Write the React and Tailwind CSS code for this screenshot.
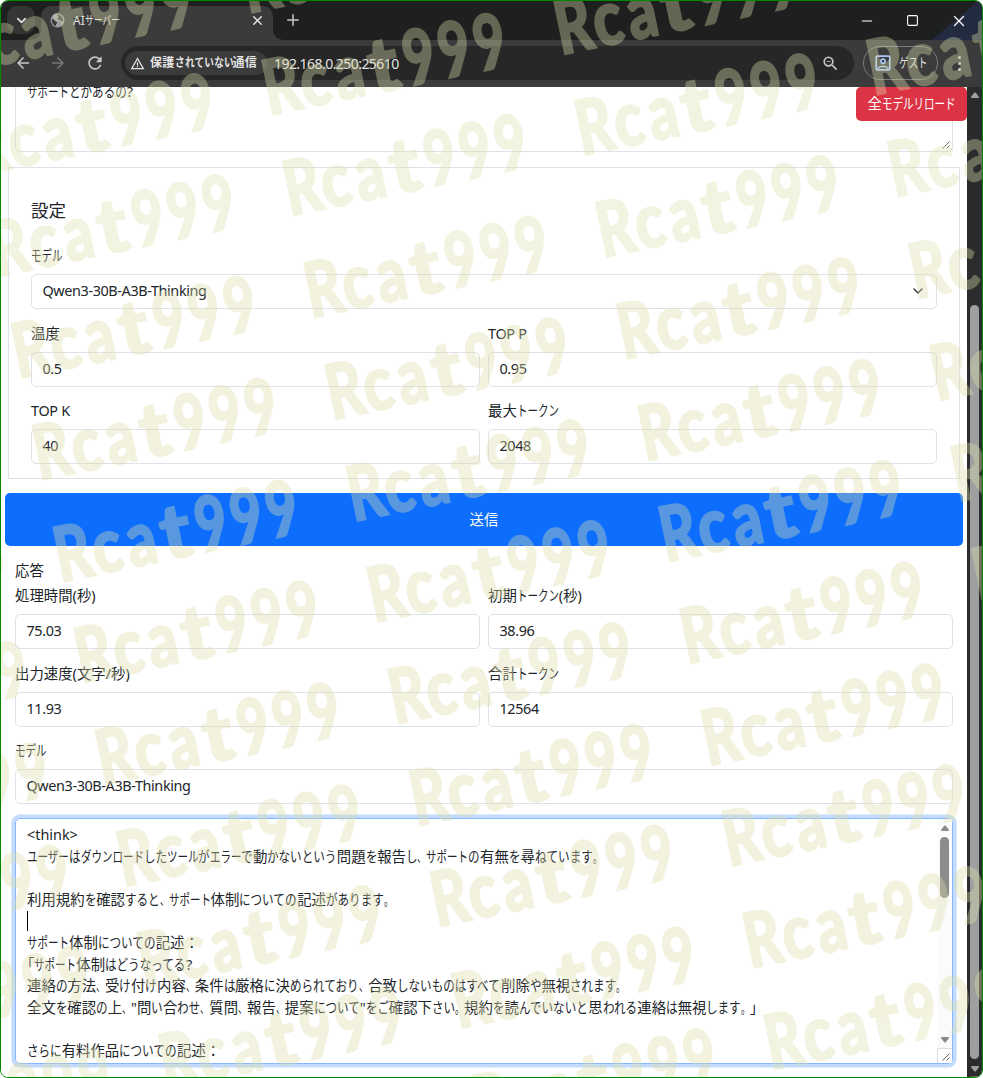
import { ChevronDown, Minus, Plus, Square, X } from 'lucide-react';
import { MdArrowBack, MdArrowForward, MdRefresh, MdWarningAmber, MdZoomOut } from 'react-icons/md';

const WATERMARK = [
  { char: 'R', style: 'scale-x-[0.74]' },
  { char: 'c', style: 'scale-x-[0.8] translate-x-[2px]' },
  { char: 'a', style: 'scale-x-[0.76] translate-x-[1px]' },
  { char: 't', style: 'scale-x-[1.05]' },
  { char: '9', style: 'scale-x-[0.72]' },
  { char: '9', style: 'scale-x-[0.72]' },
  { char: '9', style: 'scale-x-[0.72]' },
];

const RESPONSE_LINES = [
  { text: '<think>' },
  { text: 'ユーザーはダウンロードしたツールがエラーで動かないという問題を報告し、サポートの有無を尋ねています。' },
  { text: '' },
  { text: '利用規約を確認すると、サポート体制についての記述があります。' },
  { text: '', caret: true },
  { text: 'サポート体制についての記述：' },
  { text: '「サポート体制はどうなってる?' },
  { text: '連絡の方法、受け付け内容、条件は厳格に決められており、合致しないものはすべて削除や無視されます。' },
  { text: '全文を確認の上、"問い合わせ、質問、報告、提案について"をご確認下さい。規約を読んでいないと思われる連絡は無視します。」' },
  { text: '' },
  { text: 'さらに有料作品についての記述：' },
];

const CONDENSED = [
  { pattern: /^[\u30a0-\u30ff]/, ratio: 0.73 },
  { pattern: /^[\u3040-\u309f]/, ratio: 0.803 },
  { pattern: /^[、。]/, ratio: 0.62 },
];

/**
 * Japanese UI text: kanji keep their full width, kana and punctuation runs are condensed
 */
const Ja = ({ children }) => {
  const runs = children.match(/[\u30a0-\u30ff]+|[\u3040-\u309f]+|[、。]+|：|[^\u3040-\u30ff、。：]+/g) || [];
  return (
    <span className="inline-block whitespace-nowrap">
      {runs.map((run, i) => {
        const kana = CONDENSED.find((k) => k.pattern.test(run));
        if (!kana) {
          return run === '：' ? <span key={i} className="[font-feature-settings:normal]">{run}</span> : run;
        }
        return (
          <span key={i} className="inline-block [font-feature-settings:normal]" style={{ width: `${run.length * kana.ratio}em` }}>
            <span className="inline-block origin-left" style={{ transform: `scaleX(${kana.ratio})` }}>{run}</span>
          </span>
        );
      })}
    </span>
  );
};

const TabStrip = () => (
  <div className="flex h-[39px] items-start bg-[#1f2120] pl-[6px] text-[#e3e3e3]">
    <button className="mt-[5px] flex h-7 w-7 items-center justify-center rounded-[10px] bg-[#353635]">
      <ChevronDown size={15} strokeWidth={2.6} />
    </button>
    <div className="relative ml-[6px] mt-[5px] flex h-[34px] w-[232px] items-start rounded-t-[10px] bg-[#3c3c3c] pl-[9px] pt-[7px]">
      <svg className="absolute -left-[10px] bottom-0" width="10" height="10" viewBox="0 0 10 10">
        <path d="M10 0v10H0A10 10 0 0 0 10 0Z" fill="#3c3c3c" />
      </svg>
      <svg className="absolute -right-[10px] bottom-0" width="10" height="10" viewBox="0 0 10 10">
        <path d="M0 0v10h10A10 10 0 0 1 0 0Z" fill="#3c3c3c" />
      </svg>
      <svg width="15" height="15" viewBox="0 0 16 16">
        <circle cx="8" cy="8" r="7.4" fill="#9aa0a6" />
        <path d="M2 6.500c2 .2 3 .8 3.600 2 1 .3 2 .6 2 1.800 0 1-1.300 1.100-1.300 2.200v1.500C3.600 13.200 1.500 10.500 2 6.500ZM8.300 1.700c-.8 1-.1 2 1 2.200.1 1.300-1.600 1.100-1.700 2.500.5 1.200 3 .4 3.800 1.900.6.600 1.800.4 2.700.2-.1-3.300-2.300-6.100-5.800-6.800Z" fill="#3c3c3c" />
      </svg>
      <span className="ml-2 text-[12px] leading-[15px]"><Ja>AIサーバー</Ja></span>
      <X className="ml-auto mr-[8px]" size={15} strokeWidth={2.4} />
    </div>
    <Plus className="ml-[11px] mt-[10px] text-[#c7c7c7]" size={18} strokeWidth={2} />
    <div className="ml-auto flex h-[39px] items-center text-white">
      <Minus className="mr-[31px]" size={16} strokeWidth={1.6} />
      <Square size={13} strokeWidth={2} />
      <div className="flex h-full items-center bg-[linear-gradient(140deg,transparent_54%,#232c40_54.5%)] pl-[31px] pr-[14px]">
        <X size={18} strokeWidth={1.6} />
      </div>
    </div>
  </div>
);

const Toolbar = () => (
  <div className="flex h-[47px] items-center bg-[#3c3c3c] pl-[13px] pb-px text-[#c7c7c7]">
    <MdArrowBack size={18} />
    <MdArrowForward className="ml-[17px] text-[#777777]" size={18} />
    <MdRefresh className="ml-[18px]" size={20} />
    <div className="ml-[16px] flex h-[34px] w-[733px] items-center rounded-full bg-[#282828] pl-[4px] pr-[14px]">
      <div className="flex h-6 w-[142px] items-center rounded-full bg-[#3c3c3c] pl-[5px] text-[#e3e3e3]">
        <MdWarningAmber size={15} />
        <span className="ml-[5px] text-[12px] font-bold tracking-[0.3px]"><Ja>保護されていない通信</Ja></span>
      </div>
      <span className="ml-[7px] text-[14px] tracking-[-0.55px] text-[#e3e3e3]">192.168.0.250:25610</span>
      <MdZoomOut className="ml-auto" size={19} />
    </div>
    <div className="ml-[9px] flex h-[34px] w-[75px] items-center rounded-full border border-[#7d7d7d] pl-[11px]">
      <svg width="16" height="16" viewBox="0 0 16 16" fill="none" stroke="#a8c7fa" strokeWidth="1.7">
        <rect x="1.200" y="1.200" width="13.600" height="13.600" rx="1" />
        <circle cx="8" cy="6.200" r="2.100" />
        <path d="M2.500 13.500c3-3 8-3 11 0" />
      </svg>
      <span className="ml-[8px] text-[13px] text-[#e3e3e3]"><Ja>ゲスト</Ja></span>
    </div>
    <div className="ml-[20px] flex flex-col gap-[3px]">
      <i className="h-[3px] w-[3px] rounded-full bg-current" />
      <i className="h-[3px] w-[3px] rounded-full bg-current" />
      <i className="h-[3px] w-[3px] rounded-full bg-current" />
    </div>
  </div>
);

const Label = ({ children, className = '' }) => (
  <div className={`h-[22px] leading-[24px] ${className}`}>
    <Ja>{children}</Ja>
  </div>
);

const Field = ({ label, value, select, tracking = '' }) => (
  <div className="flex flex-1 flex-col">
    <Label className={tracking}>{label}</Label>
    <div className="mt-[8px] flex h-[35px] items-center justify-between rounded-[5px] border border-[#dee2e6] pb-px pl-[10.500px] pr-[10px]">
      <span className="tracking-[-0.380px]">{value}</span>
      {select && <ChevronDown size={16} strokeWidth={2.2} className="text-[#343a40]" />}
    </div>
  </div>
);

const Grip = () => (
  <svg width="12" height="12" viewBox="0 0 12 12" stroke="#6b6b6b" strokeWidth="1">
    <path d="M2.500 9.500l7-7M6.500 9.500l3-3" />
  </svg>
);

const Arrow = ({ down, className }) => (
  <svg width="10" height="8" viewBox="0 0 10 8" className={className}>
    <path d={down ? 'M1.500 1h7l.6 1-3.500 4.600h-1.200L.9 2Z' : 'M1.500 7h7l.6-1-3.500-4.600h-1.200L.9 6Z'} fill="currentColor" />
  </svg>
);

const ResponseArea = () => (
  <div className="mt-[14px] flex h-[246px] rounded-[5px] border border-[#86b7fe] shadow-[0_0_0_3.600px_#c2dbfe]">
    <div className="flex-1 overflow-hidden whitespace-nowrap pl-[11px] pt-[5px] leading-[21.600px]">
      {RESPONSE_LINES.map((line, i) => (
        <div key={i} className="flex h-[21.600px] items-center">
          {line.caret ? <i className="h-[20px] w-px bg-black" /> : <Ja>{line.text}</Ja>}
        </div>
      ))}
    </div>
    <div className="flex w-[15px] flex-col items-center bg-[#fbfbfb] pt-[5px] text-[#8b8b8b]">
      <Arrow />
      <div className="mt-[5px] h-[61px] w-[9px] rounded-full bg-[#8b8b8b]" />
      <Arrow down className="mt-auto" />
      <div className="mt-[4px] flex h-[15px] w-[15px] items-end justify-end border-l border-t border-[#dcdcdc] bg-white">
        <Grip />
      </div>
    </div>
  </div>
);

const Page = () => (
  <div className="flex-1 overflow-hidden bg-white text-[14.400px] text-[#212529]">
    <div className="mx-[14px] -mt-[6px] flex h-[71px] justify-between rounded-[5px] border border-[#dee2e6] pl-[11px]">
      <div className="h-[22px] leading-[20px]"><Ja>サポートとかあるの?</Ja></div>
      <div className="flex items-end">
        <Grip />
      </div>
    </div>

    <div className="mx-[7px] mt-[15px] h-[312px] border border-[#dee2e6] px-[22px] pt-[32px]">
      <h5 className="h-[22px] text-[17.500px] leading-[21px]">設定</h5>
      <div className="mt-[22px] flex">
        <Field label="モデル" value="Qwen3-30B-A3B-Thinking" select />
      </div>
      <div className="mt-[13px] flex gap-2">
        <Field label="温度" value="0.5" />
        <Field label="TOP P" value="0.95" tracking="tracking-[-0.300px]" />
      </div>
      <div className="mt-[12px] flex gap-2">
        <Field label="TOP K" value="40" tracking="tracking-[-0.300px]" />
        <Field label="最大トークン" value="2048" />
      </div>
    </div>

    <button className="ml-[4px] mt-[14px] block h-[53px] w-[958px] rounded-[5px] bg-[#0d6efd] text-center text-white">送信</button>

    <div className="mx-[14px] mt-[14px]">
      <div className="h-[22px] leading-[22px]">応答</div>
      <div className="mt-[2px] flex gap-2">
        <Field label="処理時間(秒)" value="75.03" />
        <Field label="初期トークン(秒)" value="38.96" />
      </div>
      <div className="mt-[13px] flex gap-2">
        <Field label="出力速度(文字/秒)" value="11.93" />
        <Field label="合計トークン" value="12564" />
      </div>
      <div className="mt-[12px] flex">
        <Field label="モデル" value="Qwen3-30B-A3B-Thinking" />
      </div>
      <ResponseArea />
    </div>
  </div>
);

// Only the marks of the tilted grid that reach into the window carry text
const isVisible = (col, row) => {
  const x = 11 + (col - 2) * 292 + (row - 6) * 21;
  const y = 323 - (col - 2) * 60.5 + (row - 6) * 101.5;
  return x > -245 && x < 983 && y > -75 && y < 1130;
};

const Watermark = () => (
  <div className="pointer-events-none absolute inset-0 overflow-hidden">
    <div className="absolute left-[5px] top-[319px] origin-top-left -rotate-[11.700deg] opacity-[0.37]">
      <div className="-ml-[596px] -mt-[622px] grid w-[1790px] auto-rows-[103.700px] grid-cols-[repeat(6,298.200px)]">
        {Array.from({ length: 102 }, (_, i) => (
          <div
            key={i}
            className="flex h-[60px] font-['Lato'] text-[76px] font-black leading-[62px] text-[#dcdeab] [-webkit-text-stroke:2px_#dcdeab]"
          >
            {isVisible(i % 6, Math.floor(i / 6)) &&
              WATERMARK.map(({ char, style }, j) => (
                <span key={j} className={`w-[35.900px] origin-left ${style}`}>{char}</span>
              ))}
          </div>
        ))}
      </div>
    </div>
  </div>
);

export default function App() {
  return (
    <div className="relative flex h-[1078px] w-[983px] flex-col overflow-hidden rounded-[8px] border border-[#008a00] bg-white font-['Noto_Sans','Noto_Sans_CJK_JP',sans-serif] [font-feature-settings:'palt']">
      <TabStrip />
      <Toolbar />
      <div className="flex min-h-0 flex-1">
        <Page />
        <div className="flex w-[15px] flex-col items-center bg-[#2c2c2c] pt-[4px] text-[#9f9f9f]">
          <Arrow />
          <div className="mt-[206px] h-[754px] w-[9px] rounded-full bg-[#9f9f9f]" />
          <Arrow down className="mt-[6px]" />
        </div>
      </div>
      <button className="absolute left-[855px] top-[86px] h-[34px] w-[111px] rounded-[5px] bg-[#dc3545] text-[14.400px] text-white">
        <Ja>全モデルリロード</Ja>
      </button>
      <Watermark />
    </div>
  );
}
